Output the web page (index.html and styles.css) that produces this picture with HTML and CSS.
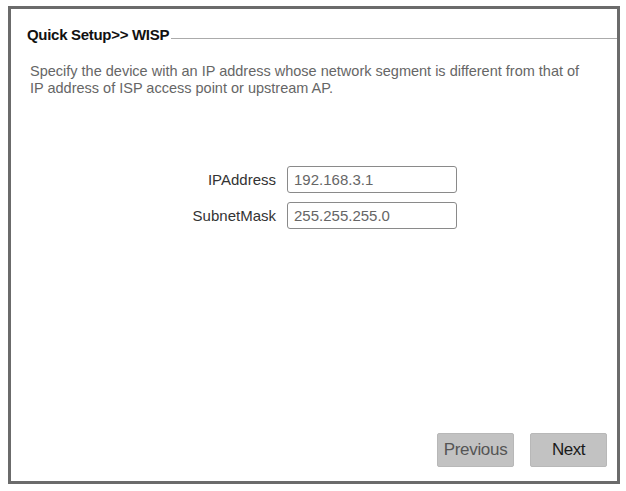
FILE: index.html
```html
<!DOCTYPE html>
<html>
<head>
<meta charset="utf-8">
<link rel="stylesheet" href="styles.css">
</head>
<body>
<div class="frame">
  <div class="legend">
    <span class="title">Quick Setup&gt;&gt; WISP</span>
    <span class="rule"></span>
  </div>
  <p class="intro">Specify the device with an IP address whose network segment is different from that of<br>IP address of ISP access point or upstream AP.</p>
  <div class="form">
    <label class="label">IPAddress</label>
    <div class="input">192.168.3.1</div>
    <label class="label">SubnetMask</label>
    <div class="input">255.255.255.0</div>
  </div>
  <div class="actions">
    <button class="btn btn-prev">Previous</button>
    <button class="btn btn-next">Next</button>
  </div>
</div>
</body>
</html>
```
FILE: styles.css
```css
html, body {
  margin: 0;
  background: #ffffff;
}
body {
  padding: 6px 6px 7px 8px;
  font-family: "Liberation Sans", Arial, sans-serif;
}
.frame {
  box-sizing: border-box;
  width: 612px;
  height: 478px;
  border: 3px solid #6b6b6b;
  display: flex;
  flex-direction: column;
}
.legend {
  display: flex;
  align-items: center;
  padding-top: 17px;
  padding-left: 16px;
}
.title {
  font-weight: bold;
  font-size: 15px;
  line-height: 17px;
  color: #111;
  letter-spacing: -0.3px;
}
.rule {
  flex: 1;
  border-top: 1px solid #ababab;
  margin-left: 2px;
  margin-top: 7px;
}
.intro {
  margin: 20px 10px 0 19px;
  font-size: 14.5px;
  line-height: 17px;
  color: #666;
  white-space: nowrap;
}
.form {
  display: grid;
  grid-template-columns: 265px 170px;
  column-gap: 11px;
  row-gap: 9px;
  margin-top: 69px;
  align-items: center;
}
.label {
  text-align: right;
  font-size: 15px;
  color: #333;
}
.input {
  box-sizing: border-box;
  height: 27px;
  border: 1px solid #8a8a8a;
  border-radius: 3px;
  padding: 0 6px;
  font-size: 15px;
  line-height: 25px;
  color: #666;
}
.actions {
  margin-top: auto;
  display: flex;
  justify-content: flex-end;
  gap: 16px;
  padding: 0 10px 14px 0;
}
.btn {
  width: 77px;
  height: 34px;
  border: 1px solid #b8b8b8;
  border-radius: 2px;
  background: #c2c2c2;
  font-family: "Liberation Sans", Arial, sans-serif;
  font-size: 17px;
  padding: 0;
}
.btn-prev { color: #555; letter-spacing: -0.3px; }
.btn-next { color: #1a1a1a; letter-spacing: -0.5px; }
```
